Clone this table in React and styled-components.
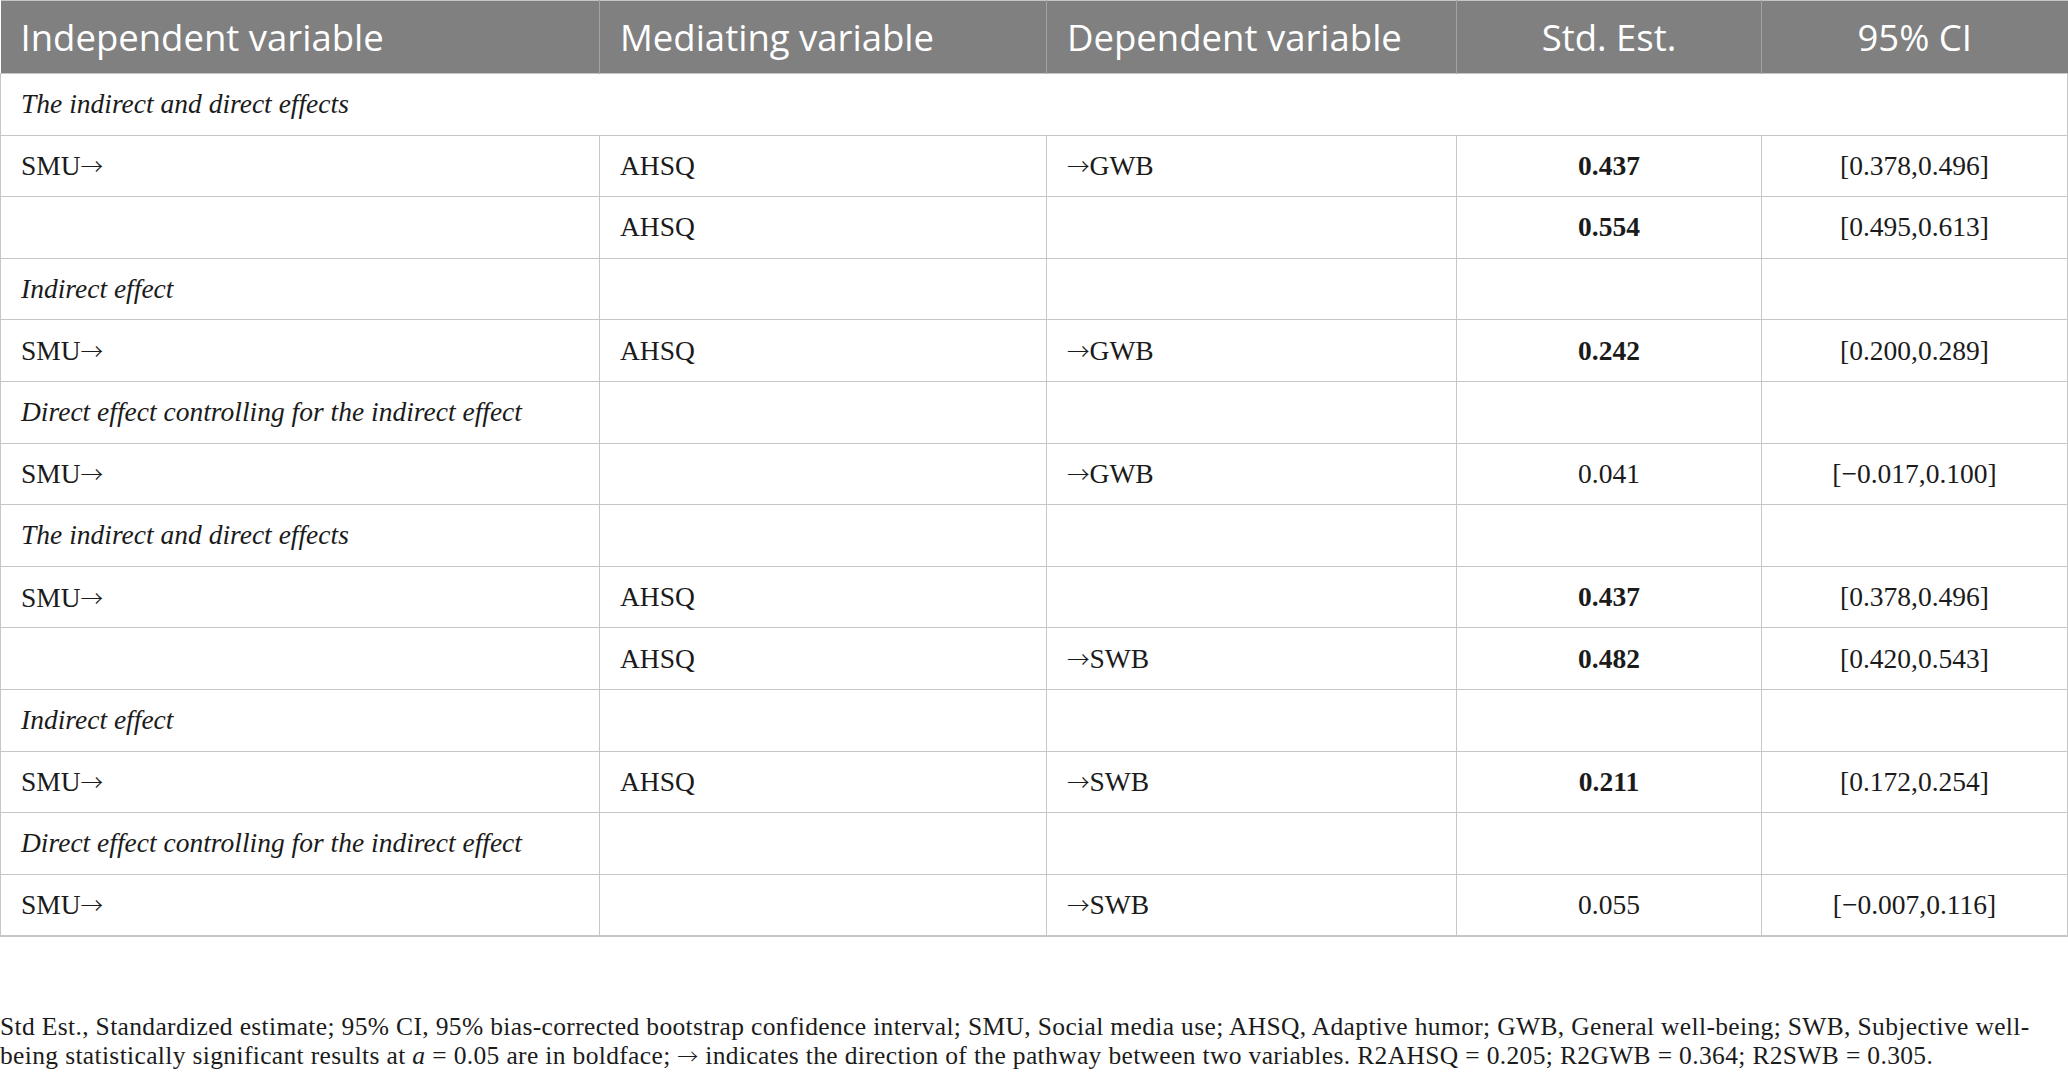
import React from "react";
import styled, { createGlobalStyle } from "styled-components";

const GlobalStyle = createGlobalStyle`
  html, body {
    margin: 0;
    padding: 0;
    background: #fff;
  }
  body {
    font-family: "Liberation Serif", "Times New Roman", serif;
    color: #1b1b1b;
  }
`;

const Page = styled.div`
  width: 2067px;
`;

const Table = styled.table`
  width: 2067px;
  border-collapse: collapse;
  table-layout: fixed;
  border-top: 1px solid #c6c6c6;
  border-bottom: 2px solid #c6c6c6;
`;

const HeadCell = styled.th`
  height: 72px;
  padding: 0 20px;
  background: #808080;
  color: #fff;
  font-family: "Open Sans", "Noto Sans", sans-serif;
  font-weight: 400;
  font-size: 36.5px;
  text-align: ${(p) => (p.$center ? "center" : "left")};
  border-left: 1px solid #a3a3a3;
  white-space: nowrap;
  &:first-child {
    border-left: none;
  }
`;

const Row = styled.tr`
  height: 61.6px;
  border-top: 1px solid #c6c6c6;
`;

const Cell = styled.td`
  padding: 0 20px;
  font-size: 27.5px;
  text-align: ${(p) => (p.$center ? "center" : "left")};
  font-weight: ${(p) => (p.$bold ? 700 : 400)};
  font-style: ${(p) => (p.$italic ? "italic" : "normal")};
  border-left: 1px solid #c6c6c6;
  border-right: 1px solid #c6c6c6;
  white-space: nowrap;
`;

const Arrow = styled.span`
  font-family: "Noto Sans CJK JP", "DejaVu Serif", sans-serif;
  font-size: 0.82em;
  font-weight: 300;
`;

const Footnote = styled.div`
  margin-top: 75px;
  font-size: 25.5px;
  letter-spacing: 0.35px;
  line-height: 29px;
  white-space: nowrap;
`;

const Alpha = styled.i``;

const rows = [
  { section: "The indirect and direct effects", span: true },
  { iv: true, mv: "AHSQ", dv: "GWB", est: "0.437", bold: true, ci: "[0.378,0.496]" },
  { iv: false, mv: "AHSQ", dv: "", est: "0.554", bold: true, ci: "[0.495,0.613]" },
  { section: "Indirect effect" },
  { iv: true, mv: "AHSQ", dv: "GWB", est: "0.242", bold: true, ci: "[0.200,0.289]" },
  { section: "Direct effect controlling for the indirect effect" },
  { iv: true, mv: "", dv: "GWB", est: "0.041", ci: "[−0.017,0.100]" },
  { section: "The indirect and direct effects" },
  { iv: true, mv: "AHSQ", dv: "", est: "0.437", bold: true, ci: "[0.378,0.496]" },
  { iv: false, mv: "AHSQ", dv: "SWB", est: "0.482", bold: true, ci: "[0.420,0.543]" },
  { section: "Indirect effect" },
  { iv: true, mv: "AHSQ", dv: "SWB", est: "0.211", bold: true, ci: "[0.172,0.254]" },
  { section: "Direct effect controlling for the indirect effect" },
  { iv: true, mv: "", dv: "SWB", est: "0.055", ci: "[−0.007,0.116]" },
];

const App = () => {
  return (
    <Page>
      <GlobalStyle />
      <Table>
        <colgroup>
          <col style={{ width: 599 }} />
          <col style={{ width: 447 }} />
          <col style={{ width: 410 }} />
          <col style={{ width: 305 }} />
          <col style={{ width: 306 }} />
        </colgroup>
        <thead>
          <tr>
            <HeadCell>Independent variable</HeadCell>
            <HeadCell>Mediating variable</HeadCell>
            <HeadCell>Dependent variable</HeadCell>
            <HeadCell $center>Std. Est.</HeadCell>
            <HeadCell $center>95% CI</HeadCell>
          </tr>
        </thead>
        <tbody>
          {rows.map((r, i) =>
            r.section ? (
              <Row key={i}>
                {r.span ? (
                  <Cell $italic colSpan={5}>
                    {r.section}
                  </Cell>
                ) : (
                  <>
                    <Cell $italic>{r.section}</Cell>
                    <Cell />
                    <Cell />
                    <Cell />
                    <Cell />
                  </>
                )}
              </Row>
            ) : (
              <Row key={i}>
                <Cell>
                  {r.iv && (
                    <>
                      SMU<Arrow>→</Arrow>
                    </>
                  )}
                </Cell>
                <Cell>{r.mv}</Cell>
                <Cell>
                  {r.dv && (
                    <>
                      <Arrow>→</Arrow>
                      {r.dv}
                    </>
                  )}
                </Cell>
                <Cell $center $bold={r.bold}>
                  {r.est}
                </Cell>
                <Cell $center>{r.ci}</Cell>
              </Row>
            )
          )}
        </tbody>
      </Table>
      <Footnote>
        Std Est., Standardized estimate; 95% CI, 95% bias-corrected bootstrap
        confidence interval; SMU, Social media use; AHSQ, Adaptive humor; GWB,
        General well-being; SWB, Subjective well-
        <br />
        being statistically significant results at <Alpha>a</Alpha> = 0.05 are in
        boldface; <Arrow>→</Arrow> indicates the direction of the pathway between two
        variables. R2AHSQ = 0.205; R2GWB = 0.364; R2SWB = 0.305.
      </Footnote>
    </Page>
  );
};

export default App;
